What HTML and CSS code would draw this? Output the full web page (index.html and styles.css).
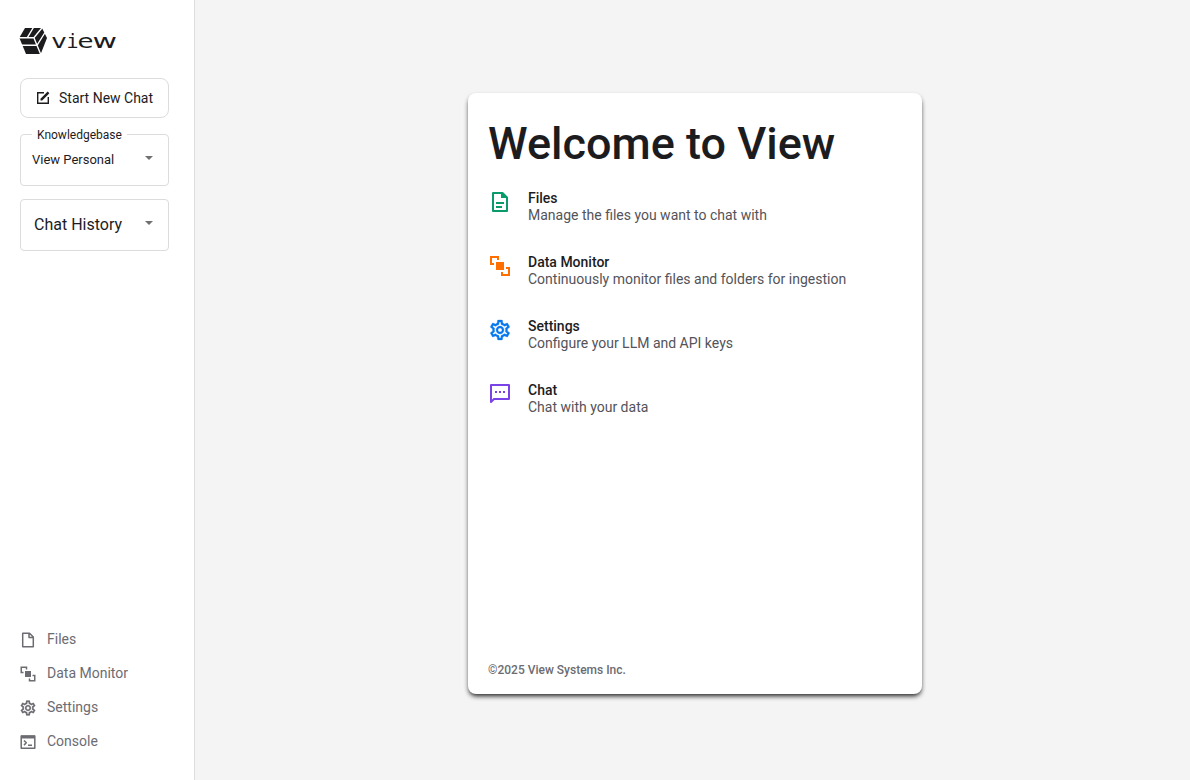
FILE: index.html
```html
<!DOCTYPE html>
<html lang="en">
<head>
<meta charset="utf-8">
<title>View</title>
<link rel="stylesheet" href="styles.css">
</head>
<body>
<svg class="defs" aria-hidden="true">
  <symbol id="monitor" viewBox="0 0 24 24"><path d="M8 8h8v8H8z M2 2h9v4H9V4H4v5h2v2H2z M22 13v9h-9v-4h2v2h5v-5h-2v-2z"/></symbol>
  <symbol id="gear" viewBox="0 0 24 24"><path d="M19.43 12.98c.04-.32.07-.64.07-.98 0-.34-.03-.66-.07-.98l2.11-1.65c.19-.15.24-.42.12-.64l-2-3.46c-.12-.22-.39-.3-.61-.22l-2.49 1c-.52-.4-1.08-.73-1.69-.98l-.38-2.65C14.46 2.18 14.25 2 14 2h-4c-.25 0-.46.18-.49.42l-.38 2.65c-.61.25-1.17.59-1.69.98l-2.49-1c-.23-.09-.49 0-.61.22l-2 3.46c-.13.22-.07.49.12.64l2.11 1.65c-.04.32-.07.65-.07.98s.03.66.07.98l-2.11 1.65c-.19.15-.24.42-.12.64l2 3.46c.12.22.39.3.61.22l2.49-1c.52.4 1.08.73 1.69.98l.38 2.65c.03.24.24.42.49.42h4c.25 0 .46-.18.49-.42l.38-2.65c.61-.25 1.17-.59 1.69-.98l2.49 1c.23.09.49 0 .61-.22l2-3.46c.12-.22.07-.49-.12-.64l-2.11-1.65zm-1.98-1.71c.04.31.05.52.05.73s-.02.43-.05.73l-.14 1.13.89.7 1.08.84-.7 1.21-1.27-.51-1.04-.42-.9.68c-.43.32-.84.56-1.25.73l-1.06.43-.16 1.13-.2 1.35h-1.4l-.19-1.35-.16-1.13-1.06-.43c-.43-.18-.83-.41-1.23-.71l-.91-.7-1.06.43-1.27.51-.7-1.21 1.08-.84.89-.7-.14-1.13c-.03-.31-.05-.54-.05-.74s.02-.43.05-.73l.14-1.13-.89-.7-1.08-.84.7-1.21 1.27.51 1.04.42.9-.68c.43-.32.84-.56 1.25-.73l1.06-.43.16-1.13.2-1.35h1.39l.19 1.35.16 1.13 1.06.43c.43.18.83.41 1.23.71l.91.7 1.06-.43 1.27-.51.7 1.21-1.07.85-.89.7.14 1.13zM12 8c-2.210 0-4 1.790-4 4s1.790 4 4 4 4-1.790 4-4-1.790-4-4-4zm0 6c-1.100 0-2-.9-2-2s.9-2 2-2 2 .9 2 2-.9 2-2 2z" stroke="currentColor" stroke-width=".3"/></symbol>
</svg>
<div class="app">
  <aside class="sidebar">
    <div class="logo">
      <svg width="98" height="28" viewBox="0 0 98 28">
        <path d="M.3 10.800 6 1H23L28 11 21.700 27H7z"/>
        <path class="gap" d="M0 10.800H14.900L23.700 0M14.900 10.800 22 28M2 18.300H18L26 5.500M14.700 0 8.200 10.800"/>
        <text class="wordmark" y="20.500"><tspan x="32.500" textLength="15" lengthAdjust="spacingAndGlyphs">v</tspan><tspan class="slab" x="47.500" textLength="12" lengthAdjust="spacingAndGlyphs">i</tspan><tspan x="58.500" textLength="16" lengthAdjust="spacingAndGlyphs">e</tspan><tspan x="73.500" textLength="24.500" lengthAdjust="spacingAndGlyphs">w</tspan></text>
      </svg>
    </div>
    <button class="new-chat">
      <svg width="14" height="14" viewBox="0 0 14 14"><path d="M8 1.700H1.700v10.600h10.600V6" fill="none" stroke="currentColor" stroke-width="1.400"/><path d="M4.500 7.800 11.700.6l1.700 1.700L6.200 9.500H4.500z"/></svg>
      <span>Start New Chat</span>
    </button>
    <fieldset class="select knowledge">
      <legend>Knowledgebase</legend>
      <span>View Personal</span><i class="caret"></i>
    </fieldset>
    <div class="select history"><span>Chat History</span><i class="caret"></i></div>
    <nav class="menu">
      <a><svg viewBox="0 0 16 16"><path d="M2.700 1.200h6.800l3.800 3.900v9.700H2.700zM9 1.200v4.400h4.300" fill="none" stroke="currentColor" stroke-width="1.500" stroke-linejoin="round"/></svg>Files</a>
      <a><svg class="large"><use href="#monitor"/></svg>Data Monitor</a>
      <a><svg class="large"><use href="#gear"/></svg>Settings</a>
      <a><svg viewBox="0 0 16 16"><path d="M1.200 2h13.600v12.200H1.200zM4 6.500l2.300 2.300L4 11.100M8 11.300h4" fill="none" stroke="currentColor" stroke-width="1.500" stroke-linejoin="round"/><path d="M1 1.500h14v3H1z"/></svg>Console</a>
    </nav>
  </aside>
  <main class="main">
    <section class="card">
      <h1>Welcome to View</h1>
      <ul class="features">
        <li>
          <svg class="green" width="24" height="24" viewBox="0 0 24 24"><path d="M5 3h9.500L19 7.500V21H5z" fill="none" stroke="currentColor" stroke-width="2" stroke-linejoin="round"/><path d="M13 3h2l5 5H13zM8 12h8v2H8zM8 16h6v2H8z"/></svg>
          <div><h2>Files</h2><p>Manage the files you want to chat with</p></div>
        </li>
        <li>
          <svg class="orange" width="24" height="24"><use href="#monitor"/></svg>
          <div><h2>Data Monitor</h2><p>Continuously monitor files and folders for ingestion</p></div>
        </li>
        <li>
          <svg class="blue" width="24" height="24"><use href="#gear"/></svg>
          <div><h2>Settings</h2><p>Configure your LLM and API keys</p></div>
        </li>
        <li>
          <svg class="purple" width="24" height="24" viewBox="0 0 24 24"><path d="M3 20V3h18v14H6z" fill="none" stroke="currentColor" stroke-width="2" stroke-linejoin="round"/><path d="M7 9h2v2H7zM11 9h2v2h-2zM15 9h2v2h-2z"/></svg>
          <div><h2>Chat</h2><p>Chat with your data</p></div>
        </li>
      </ul>
      <footer>©2025 View Systems Inc.</footer>
    </section>
  </main>
</div>
</body>
</html>
```
FILE: styles.css
```css
* { box-sizing: border-box; }
body { margin: 0; font-family: Roboto, "Liberation Sans", sans-serif; color: #1c1c1f; }
h1, h2, p, ul { margin: 0; padding: 0; }
svg { display: block; flex: none; fill: currentColor; }
.defs { display: none; }
.app { display: flex; height: 780px; }
.sidebar { width: 195px; padding: 27px 25px 22px 20px; border-right: 1px solid #dcdcde; background: #fff; display: flex; flex-direction: column; }
.logo { height: 51px; margin-left: -1px; }
.gap { fill: none; stroke: #fff; stroke-width: 1.4; }
.wordmark { font: 20px "DejaVu Sans", sans-serif; }
.slab { font-family: "DejaVu Sans Mono", monospace; }
.new-chat { height: 40px; padding: 0 15px; border: 1px solid #dcdcde; border-radius: 8px; background: #fff; color: inherit; font: 14px Roboto, sans-serif; display: flex; align-items: center; gap: 9px; white-space: nowrap; }
.select { border: 1px solid #dcdcde; border-radius: 4px; display: flex; justify-content: space-between; align-items: center; margin: 0; }
.knowledge { height: 59px; margin-top: 9px; padding: 10px 15px 8px 11px; font-size: 13px; min-width: 0; }
.knowledge legend { padding: 1px 5px 0; font-size: 12px; line-height: 14px; }
.knowledge .caret { margin-bottom: 3px; }
.history { height: 52px; margin-top: 13px; padding: 0 15px 2px 13px; font-size: 16px; }
.caret { border: 4px solid transparent; border-top-color: #707070; border-bottom: 0; margin-bottom: 2px; }
.menu { margin-top: auto; }
.menu a { height: 34px; display: flex; align-items: center; font-size: 14px; color: #6c6c72; }
.menu svg { width: 16px; height: 16px; margin: 1px 11px 0 0; }
.menu .large { width: 18px; height: 18px; margin: 1px 10px 0 -1px; }
.main { flex: 1; display: flex; align-items: center; justify-content: center; background: #f4f4f4; padding: 7px 0 0 5px; }
.card { width: 454px; height: 601px; padding: 21px 20px 20px; background: #fff; border-radius: 8px; box-shadow: 0 3px 5px -1px #1c1c1f; display: flex; flex-direction: column; }
h1 { font-size: 45px; line-height: 60px; font-weight: 500; }
.features { list-style: none; margin-top: 16px; display: grid; gap: 30px; }
.features li { display: flex; gap: 16px; height: 34px; }
h2 { font-size: 14px; line-height: 17px; font-weight: 500; }
.features p { font-size: 14px; line-height: 17px; color: #535359; }
.green { color: #099b6b; }
.orange { color: #ff6f00; }
.blue { color: #0878ee; }
.purple { color: #7a43e8; }
footer { margin-top: auto; font-size: 12px; line-height: 14px; margin-bottom: -3px; font-weight: 500; color: #6c6c72; }
```
